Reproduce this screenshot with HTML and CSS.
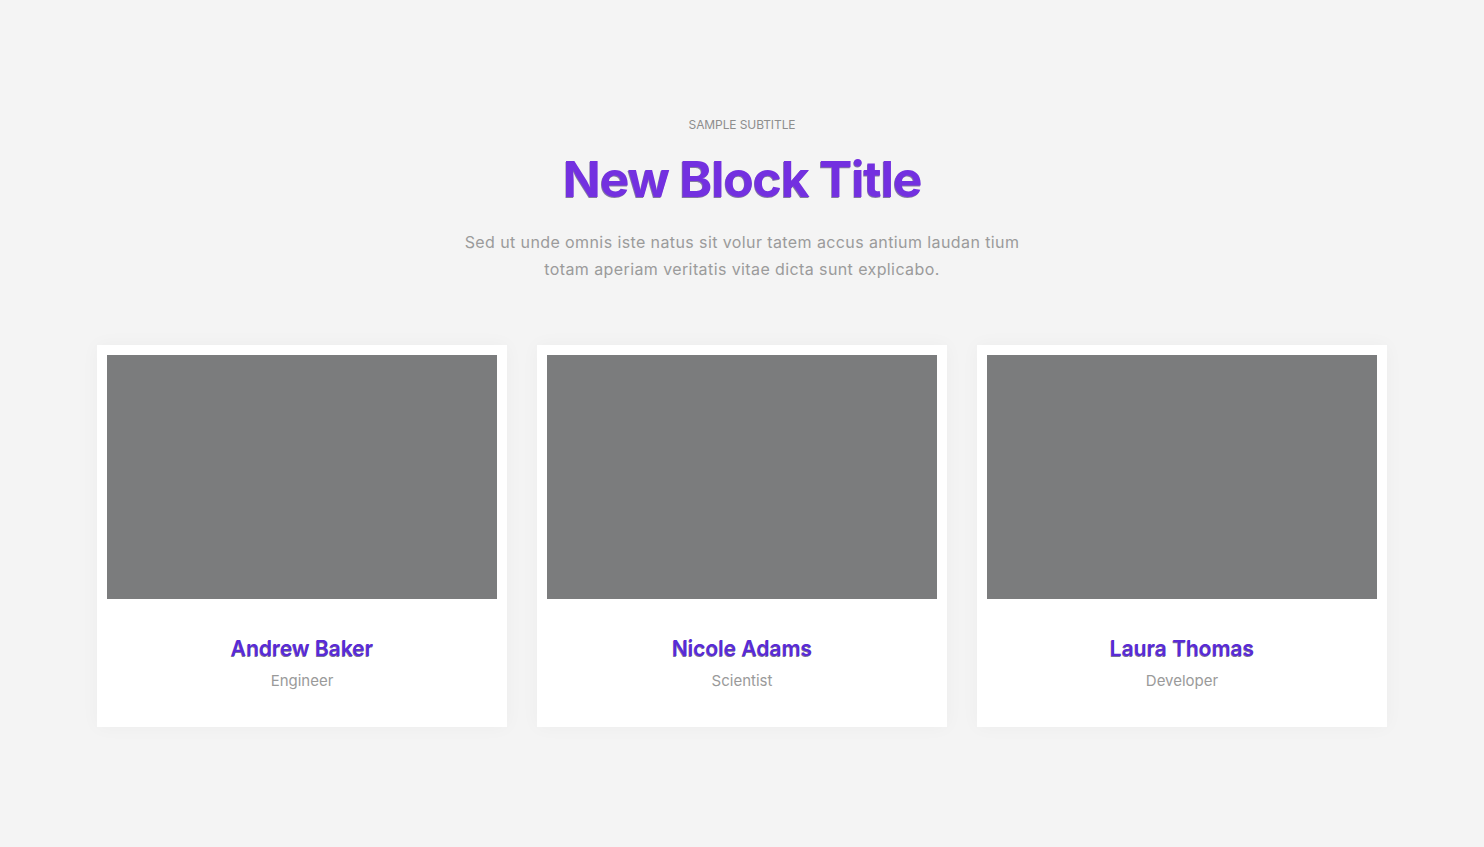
FILE: index.html
```html
<!DOCTYPE html>
<html lang="en">
<head>
<meta charset="utf-8">
<title>Team</title>
<link rel="stylesheet" href="styles.css">
</head>
<body>
<section class="team">
  <header class="head">
    <p class="subtitle">SAMPLE SUBTITLE</p>
    <h1 class="title">New Block Title</h1>
    <p class="lead">Sed ut unde omnis iste natus sit volur tatem accus antium laudan tium totam aperiam veritatis vitae dicta sunt explicabo.</p>
  </header>
  <div class="cards">
    <article class="card">
      <div class="photo"></div>
      <h3 class="name">Andrew Baker</h3>
      <p class="role">Engineer</p>
    </article>
    <article class="card">
      <div class="photo"></div>
      <h3 class="name">Nicole Adams</h3>
      <p class="role">Scientist</p>
    </article>
    <article class="card">
      <div class="photo"></div>
      <h3 class="name">Laura Thomas</h3>
      <p class="role">Developer</p>
    </article>
  </div>
</section>
</body>
</html>
```
FILE: styles.css
```css
* { box-sizing: border-box; }
html, body { margin: 0; padding: 0; }
body {
  background: #f4f4f4;
  font-family: Inter, "Open Sans", "Liberation Sans", sans-serif;
  min-height: 847px;
}
.team {
  padding: 117px 97px 120px;
}
.head {
  display: flex;
  flex-direction: column;
  align-items: center;
  text-align: center;
}
.subtitle {
  margin: 0;
  font-size: 12px;
  line-height: 16px;
  color: #8d8d8d;
  letter-spacing: -0.1px;
}
.title {
  margin: 16px 0 0;
  font-size: 50px;
  line-height: 60px;
  font-weight: 700;
  letter-spacing: -1.3px;
  color: #7330e0;
  text-shadow: -0.6px 0.6px 0 rgba(40, 20, 90, 0.55);
}
.lead {
  margin: 20px 0 0;
  width: 580px;
  font-size: 16px;
  line-height: 27px;
  color: #9b9b9b;
  letter-spacing: 0.4px;
}
.cards {
  margin-top: 62px;
  display: grid;
  grid-template-columns: repeat(3, 410px);
  gap: 30px;
  justify-content: center;
}
.card {
  background: #fff;
  padding: 10px 10px 36px;
  text-align: center;
  box-shadow: 0 0 18px rgba(0, 0, 0, 0.035);
}
.photo {
  height: 244px;
  background: #7b7c7d;
}
.name {
  margin: 37px 0 0;
  font-size: 21px;
  line-height: 26px;
  font-weight: 600;
  letter-spacing: 0;
  color: #5a2ad6;
  text-shadow: -0.5px 0.5px 0 rgba(30, 20, 80, 0.6);
}
.role {
  margin: 9px 0 0;
  font-size: 15px;
  line-height: 20px;
  color: #9a9a9a;
  letter-spacing: 0;
}
```
